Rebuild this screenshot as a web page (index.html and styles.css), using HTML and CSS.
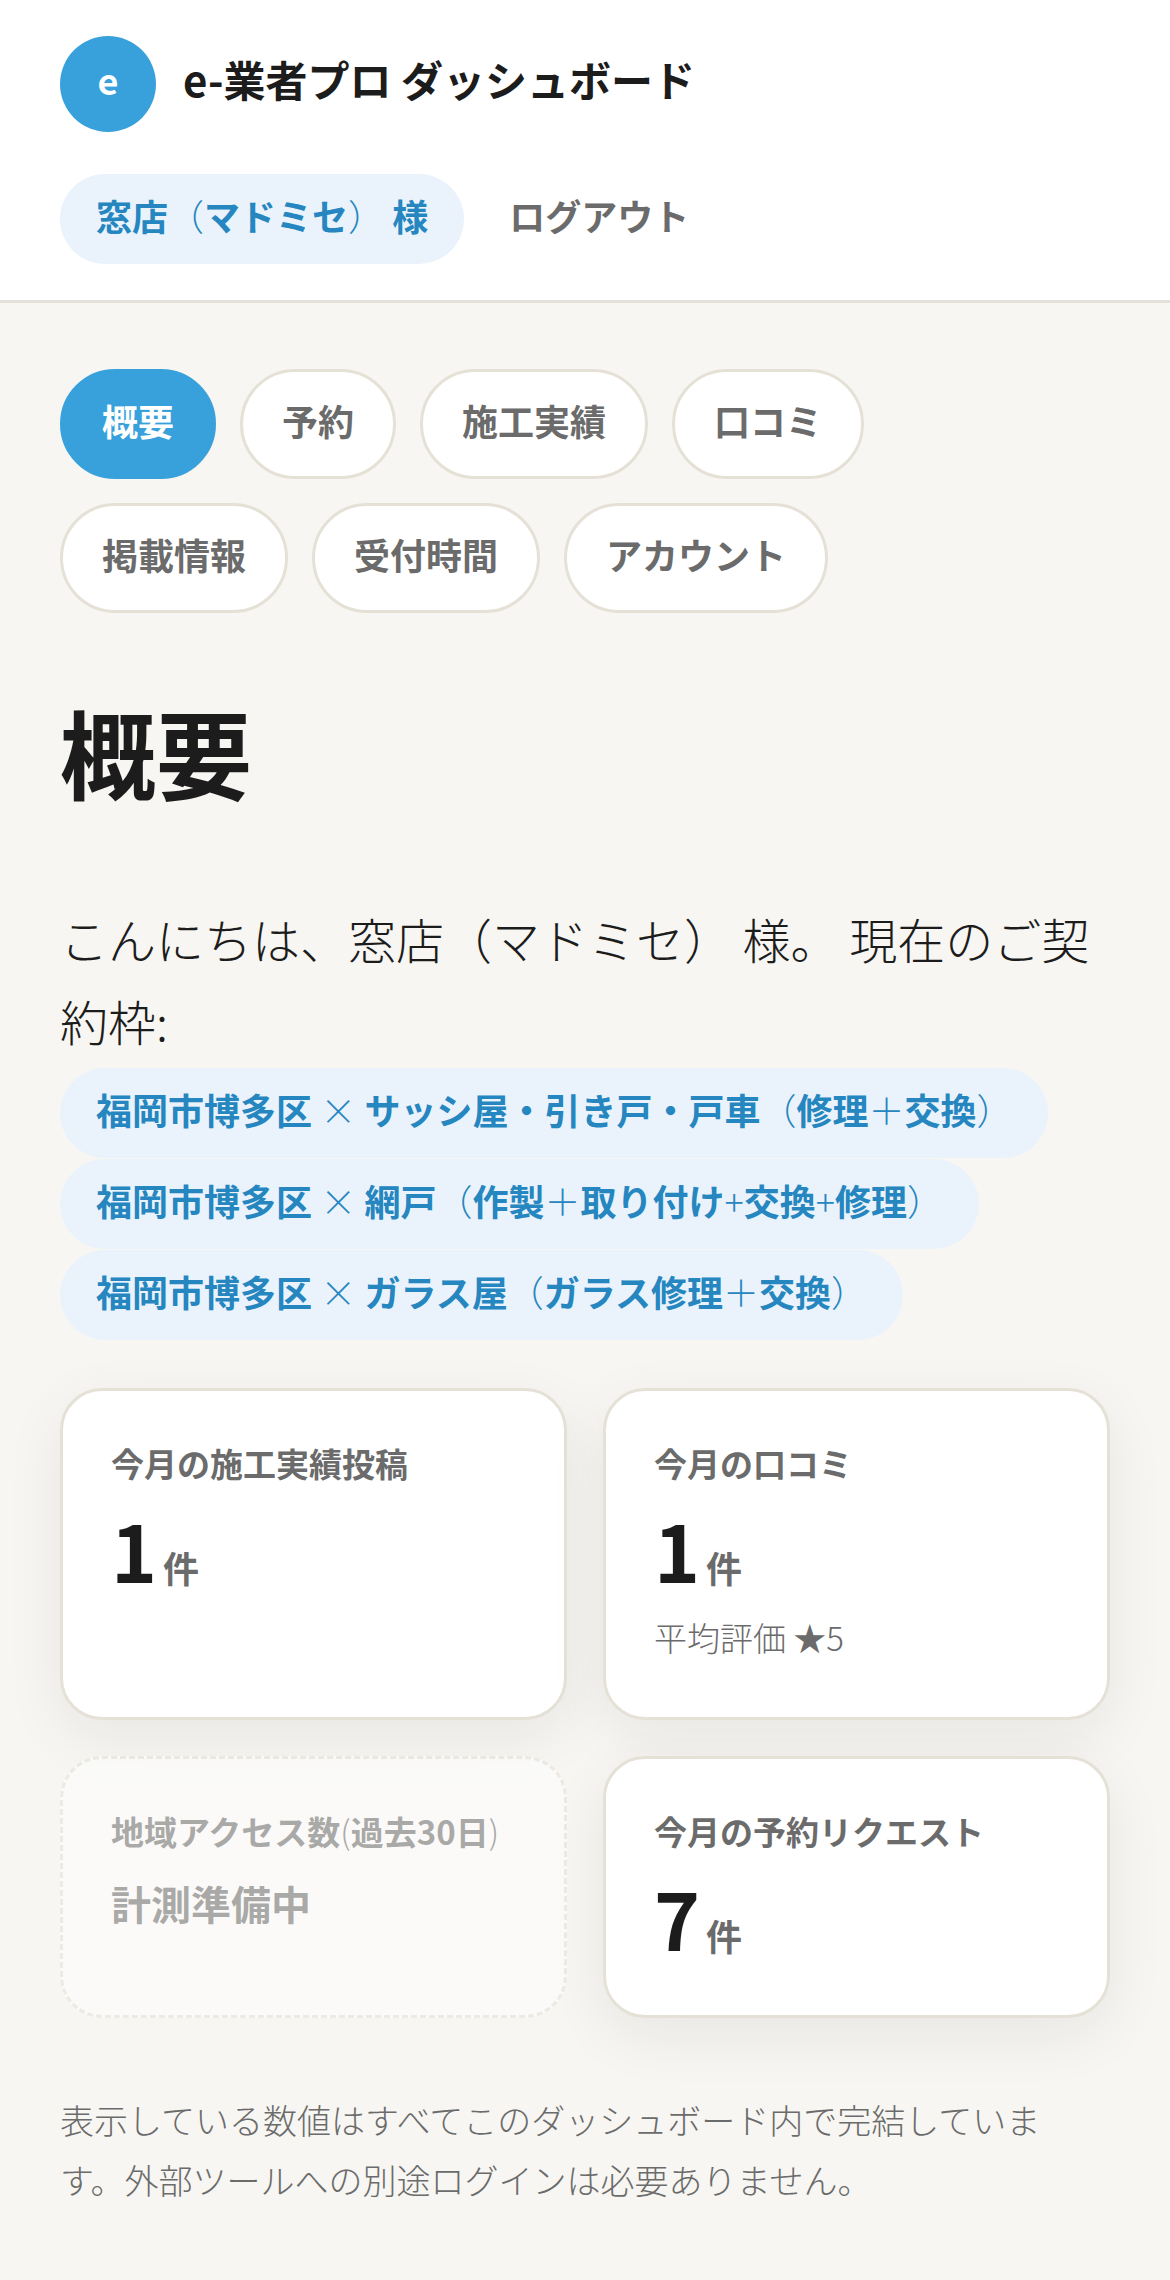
FILE: index.html
```html
<!DOCTYPE html>
<html lang="ja">
<head>
    <meta charset="UTF-8">
    <meta name="viewport" content="width=device-width, initial-scale=1.0">
    <title>e-業者プロ ダッシュボード</title>
    <link rel="stylesheet" href="styles.css">
</head>
<body>
    <header class="header">
        <div class="brand">
            <span class="logo">e</span>
            <span class="brand-name">e-業者プロ ダッシュボード</span>
        </div>
        <div class="user">
            <span class="chip">窓店<span class="thin">（</span>マドミセ<span class="thin">）</span> 様</span>
            <button class="logout" type="button">ログアウト</button>
        </div>
    </header>
    <main class="main">
        <nav class="tabs">
            <a class="tab active" href="#overview">概要</a>
            <a class="tab" href="#reservations">予約</a>
            <a class="tab" href="#works">施工実績</a>
            <a class="tab" href="#reviews">口コミ</a>
            <a class="tab" href="#listing">掲載情報</a>
            <a class="tab" href="#hours">受付時間</a>
            <a class="tab" href="#account">アカウント</a>
        </nav>
        <h1 class="title">概要</h1>
        <p class="greeting">こんにちは、窓店（マドミセ） 様。 現在のご契約枠:</p>
        <div class="plans">
            <span class="chip">福岡市博多区 <span class="thin">×</span> サッシ屋・引き戸・戸車<span class="thin">（</span>修理<span class="thin">＋</span>交換<span class="thin">）</span></span>
            <span class="chip">福岡市博多区 <span class="thin">×</span> 網戸<span class="thin">（</span>作製<span class="thin">＋</span>取り付け<span class="thin">+</span>交換<span class="thin">+</span>修理<span class="thin">）</span></span>
            <span class="chip">福岡市博多区 <span class="thin">×</span> ガラス屋<span class="thin">（</span>ガラス修理<span class="thin">＋</span>交換<span class="thin">）</span></span>
        </div>
        <section class="cards">
            <div class="card">
                <div class="label">今月の施工実績投稿</div>
                <div class="value">1<span class="unit">件</span></div>
            </div>
            <div class="card">
                <div class="label">今月の口コミ</div>
                <div class="value">1<span class="unit">件</span></div>
                <div class="sub">平均評価 ★5</div>
            </div>
            <div class="card pending">
                <div class="label">地域アクセス数<span class="thin">(</span>過去30日<span class="thin">)</span></div>
                <div class="pending-text">計測準備中</div>
            </div>
            <div class="card">
                <div class="label">今月の予約リクエスト</div>
                <div class="value">7<span class="unit">件</span></div>
            </div>
        </section>
        <p class="note">表示している数値はすべてこのダッシュボード内で完結しています。外部ツールへの別途ログインは必要ありません。</p>
    </main>
</body>
</html>
```

FILE: styles.css
```css
* {
    box-sizing: border-box;
}
body {
    margin: 0;
    background-color: #f7f6f2;
    color: #1c1c1c;
    font-family: "Noto Sans CJK JP", "Noto Sans", sans-serif;
    font-size: 48px;
    font-weight: 300;
    line-height: 82px;
}
.header {
    display: flex;
    flex-direction: column;
    gap: 42px;
    padding: 36px 60px;
    background-color: #fff;
    border-bottom: 3px solid #e6e1d8;
}
.brand {
    display: flex;
    align-items: center;
    gap: 27px;
}
.logo {
    display: flex;
    align-items: center;
    justify-content: center;
    width: 96px;
    height: 96px;
    padding-bottom: 10px;
    border-radius: 50%;
    background-color: #38a1db;
    color: #fff;
    font-size: 36px;
    font-weight: 700;
}
.brand-name {
    padding-bottom: 10px;
    font-size: 42px;
    font-weight: 700;
}
.user {
    display: flex;
    align-items: center;
    gap: 45px;
}
.chip {
    padding: 10px 36px 18px;
    border-radius: 48px;
    background-color: #eaf3fb;
    color: #2586c0;
    font-size: 36px;
    font-weight: 700;
    line-height: 62px;
}
.thin {
    font-weight: 300;
}
.logout {
    padding: 0 0 8px;
    border: none;
    background: none;
    color: #6b6b6b;
    font-family: inherit;
    font-size: 36px;
    font-weight: 700;
    cursor: pointer;
}
.main {
    padding: 66px 60px;
}
.tabs {
    display: flex;
    flex-wrap: wrap;
    gap: 24px;
}
.tab {
    padding: 17px 39px 25px;
    border: 3px solid #e5e1d7;
    border-radius: 60px;
    background-color: #fff;
    color: #6b6b6b;
    font-size: 36px;
    font-weight: 700;
    line-height: 62px;
    text-decoration: none;
}
.tab.active {
    border-color: #38a1db;
    background-color: #38a1db;
    color: #fff;
}
.title {
    margin: 56px 0 64px;
    font-size: 96px;
    font-weight: 700;
    line-height: 164px;
}
.greeting {
    margin: 0;
}
.plans {
    display: flex;
    flex-direction: column;
    align-items: flex-start;
    gap: 1px;
    padding-top: 7px;
}
.cards {
    display: grid;
    grid-template-columns: 1fr 1fr;
    gap: 36px;
    margin-top: 48px;
}
.card {
    padding: 44px 48px 52px;
    border: 3px solid #e5e1d7;
    border-radius: 42px;
    background-color: #fff;
    box-shadow: 0 18px 60px rgba(28, 28, 28, 0.07);
}
.label {
    color: #6b6b6b;
    font-size: 33px;
    font-weight: 700;
    line-height: 56px;
}
.value {
    margin-top: 12px;
    font-size: 78px;
    font-weight: 700;
    line-height: 92px;
}
.unit {
    margin-left: 6px;
    color: #6b6b6b;
    font-size: 36px;
    line-height: 36px;
}
.sub {
    margin-top: 14px;
    color: #6b6b6b;
    font-size: 33px;
    line-height: 56px;
}
.pending {
    border-style: dashed;
    box-shadow: none;
    opacity: 0.55;
}
.pending-text {
    margin-top: 10px;
    color: #6b6b6b;
    font-size: 40px;
    font-weight: 700;
    line-height: 68px;
}
.note {
    margin: 72px 0 0;
    padding-right: 20px;
    color: #6b6b6b;
    font-size: 34px;
    line-height: 60px;
}
```
